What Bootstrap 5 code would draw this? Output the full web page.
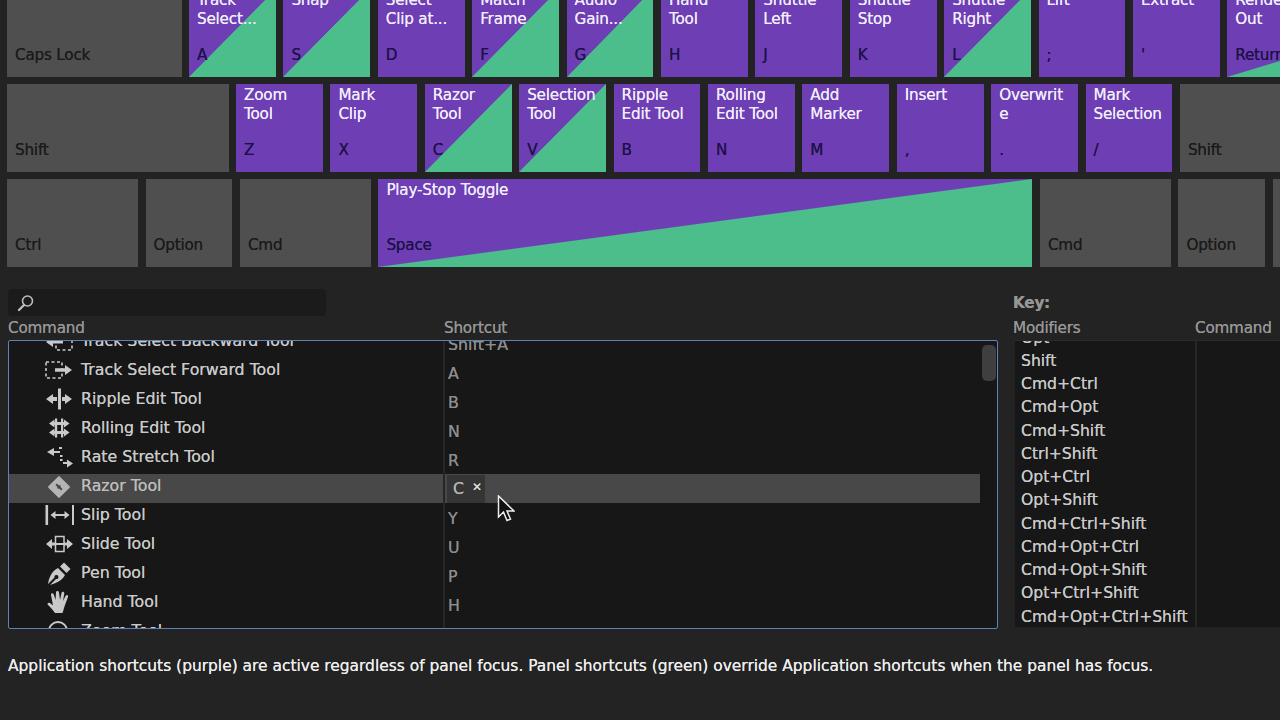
<!DOCTYPE html>
<html lang="en">
<head>
  <meta charset="UTF-8">
  <meta name="viewport" content="width=device-width, initial-scale=1.0">
  <title>Keyboard Shortcuts</title>
  <link href="https://cdn.jsdelivr.net/npm/bootstrap@5.3.0/dist/css/bootstrap.min.css" rel="stylesheet">
  <style>
    html, body { height: 720px; overflow: hidden; }
    body {
      background-color: #232323;
      font-family: "DejaVu Sans", sans-serif;
      font-size: 15.2px;
      letter-spacing: -0.2px;
      text-shadow: 0 0 .6px currentColor;
    }
    .kb-wrap { margin-top: -11px; padding-left: 7px; gap: 7.5px; width: 1400px; }
    .kb-row { gap: 7.5px; }
    .kb-key {
      width: 86.9px;
      height: 87.5px;
      flex: none;
      padding: 2px 2px 11.5px 8px;
      line-height: 19px;
      color: #f1edf8;
      background: #6e3fb4;
    }
    .kb-split { background: linear-gradient(to bottom right, #6e3fb4 49.7%, #4bbe8c 50.3%); }
    .kb-mod { background: #4f4f4f; }
    .kb-letter { color: #1d1248; }
    .kb-mod .kb-letter { color: #1b1b1b; }
    .w-caps { width: 174.5px; }
    .w-shift { width: 221.5px; }
    .w-ctrl { width: 131px; }
    .w-space { width: 654px; }
    .w-rshift { width: 180px; }
    .w-return { width: 290px; }

    .cmd-area { margin-top: 22.5px; padding-left: 8px; }
    .cmd-left { width: 990px; flex: none; }
    .cmd-right { margin-left: 15px; width: 300px; flex: none; padding-top: 4px; }
    .search-box { width: 318px; height: 27px; background: #1b1b1b; padding-left: 8px; }
    .head-txt { color: #969696; line-height: 20px; height: 20px; margin-top: 2px; }
    .col-cmd { width: 436px; }
    .cmd-panel {
      height: 289px;
      margin-top: 2px;
      background: #171717;
      border: 1px solid #5f80b8;
      border-radius: 2px;
      overflow: hidden;
      font-size: 15.8px;
      letter-spacing: 0;
    }
    .cmd-scroll { margin-top: -12px; }
    .cmd-row { height: 29px; color: #c9c9c9; width: 971px; }
    .cmd-row.is-active { background: #484848; color: #bdbdbd; }
    .cmd-name { width: 436px; padding-left: 35px; padding-bottom: 6px; gap: 7px; height: 100%; border-right: 2px solid #262626; }
    .cmd-name svg { flex: none; }
    .sc-txt { color: #8d8d8d; padding: 2px 0 0 3px; }
    .sc-chip {
      margin-left: 2px;
      width: 38px;
      height: 28px;
      background: #353535;
      color: #b5b5b5;
      padding: 1px 0 0 6px;
      gap: 8px;
    }
    .sc-x { font-size: 12px; line-height: 1; margin-top: -5px; color: #ddd; }
    .scroll-thumb {
      top: 4px;
      right: 1px;
      width: 14px;
      height: 36px;
      background: #3f3f3f;
      border-radius: 5px;
    }
    .mouse-ptr { left: 488px; top: 154px; }

    .key-title { color: #969696; font-weight: 700; line-height: 20px; height: 20px; }
    .cmd-right .head-txt { margin-top: 5px; }
    .head-mod { width: 182px; }
    .mod-panel { height: 287px; margin: 2px 0 0 2px; background: #171717; overflow: hidden; border-top: 1px solid #2b2b2b; }
    .mod-col { width: 182px; margin-top: -14.5px; padding-left: 6px; border-right: 2px solid #262626; height: 320px; color: #c9c9c9; font-size: 15.6px; letter-spacing: 0; }
    .mod-col div { height: 23.25px; line-height: 23px; white-space: nowrap; }
    .foot-note { padding: 26px 0 0 8px; color: #eee; font-size: 15.45px; letter-spacing: 0; white-space: nowrap; }
  </style>
</head>
<body>
  <!-- keyboard -->
  <div class="kb-wrap d-flex flex-column">
    <div class="kb-row d-flex">
      <div class="kb-key kb-mod w-caps d-flex flex-column justify-content-end"><span class="kb-letter">Caps Lock</span></div>
      <div class="kb-key kb-split d-flex flex-column justify-content-between"><span>Track<br>Select...</span><span class="kb-letter">A</span></div>
      <div class="kb-key kb-split d-flex flex-column justify-content-between"><span>Snap</span><span class="kb-letter">S</span></div>
      <div class="kb-key d-flex flex-column justify-content-between"><span>Select<br>Clip at...</span><span class="kb-letter">D</span></div>
      <div class="kb-key kb-split d-flex flex-column justify-content-between"><span>Match<br>Frame</span><span class="kb-letter">F</span></div>
      <div class="kb-key kb-split d-flex flex-column justify-content-between"><span>Audio<br>Gain...</span><span class="kb-letter">G</span></div>
      <div class="kb-key d-flex flex-column justify-content-between"><span>Hand<br>Tool</span><span class="kb-letter">H</span></div>
      <div class="kb-key d-flex flex-column justify-content-between"><span>Shuttle<br>Left</span><span class="kb-letter">J</span></div>
      <div class="kb-key d-flex flex-column justify-content-between"><span>Shuttle<br>Stop</span><span class="kb-letter">K</span></div>
      <div class="kb-key kb-split d-flex flex-column justify-content-between"><span>Shuttle<br>Right</span><span class="kb-letter">L</span></div>
      <div class="kb-key d-flex flex-column justify-content-between"><span>Lift</span><span class="kb-letter">;</span></div>
      <div class="kb-key d-flex flex-column justify-content-between"><span>Extract</span><span class="kb-letter">'</span></div>
      <div class="kb-key kb-split w-return d-flex flex-column justify-content-between"><span>Render<br>Out</span><span class="kb-letter">Return</span></div>
    </div>
    <div class="kb-row d-flex">
      <div class="kb-key kb-mod w-shift d-flex flex-column justify-content-end"><span class="kb-letter">Shift</span></div>
      <div class="kb-key d-flex flex-column justify-content-between"><span>Zoom<br>Tool</span><span class="kb-letter">Z</span></div>
      <div class="kb-key d-flex flex-column justify-content-between"><span>Mark<br>Clip</span><span class="kb-letter">X</span></div>
      <div class="kb-key kb-split d-flex flex-column justify-content-between"><span>Razor<br>Tool</span><span class="kb-letter">C</span></div>
      <div class="kb-key kb-split d-flex flex-column justify-content-between"><span>Selection<br>Tool</span><span class="kb-letter">V</span></div>
      <div class="kb-key d-flex flex-column justify-content-between"><span>Ripple<br>Edit Tool</span><span class="kb-letter">B</span></div>
      <div class="kb-key d-flex flex-column justify-content-between"><span>Rolling<br>Edit Tool</span><span class="kb-letter">N</span></div>
      <div class="kb-key d-flex flex-column justify-content-between"><span>Add<br>Marker</span><span class="kb-letter">M</span></div>
      <div class="kb-key d-flex flex-column justify-content-between"><span>Insert</span><span class="kb-letter">,</span></div>
      <div class="kb-key d-flex flex-column justify-content-between"><span>Overwrit<br>e</span><span class="kb-letter">.</span></div>
      <div class="kb-key d-flex flex-column justify-content-between"><span>Mark<br>Selection</span><span class="kb-letter">/</span></div>
      <div class="kb-key kb-mod w-rshift d-flex flex-column justify-content-end"><span class="kb-letter">Shift</span></div>
    </div>
    <div class="kb-row d-flex">
      <div class="kb-key kb-mod w-ctrl d-flex flex-column justify-content-end"><span class="kb-letter">Ctrl</span></div>
      <div class="kb-key kb-mod d-flex flex-column justify-content-end"><span class="kb-letter">Option</span></div>
      <div class="kb-key kb-mod w-ctrl d-flex flex-column justify-content-end"><span class="kb-letter">Cmd</span></div>
      <div class="kb-key kb-split w-space d-flex flex-column justify-content-between"><span>Play-Stop Toggle</span><span class="kb-letter">Space</span></div>
      <div class="kb-key kb-mod w-ctrl d-flex flex-column justify-content-end"><span class="kb-letter">Cmd</span></div>
      <div class="kb-key kb-mod d-flex flex-column justify-content-end"><span class="kb-letter">Option</span></div>
      <div class="kb-key kb-mod d-flex flex-column justify-content-end"><span class="kb-letter">Cmd</span></div>
    </div>
  </div>

  <div class="cmd-area d-flex">
    <div class="cmd-left">
      <div class="search-box d-flex align-items-center rounded-1">
        <svg width="20" height="18" viewBox="0 0 20 18" fill="none" stroke="#bdbdbd"><circle cx="11.5" cy="7" r="5" stroke-width="1.6"/><path d="M8 11 3 16" stroke-width="2.4" stroke-linecap="round"/></svg>
      </div>
      <div class="head-txt d-flex"><span class="col-cmd">Command</span><span>Shortcut</span></div>
      <div class="cmd-panel position-relative">
        <div class="cmd-scroll">
          <div class="cmd-row d-flex align-items-center">
            <div class="cmd-name d-flex align-items-center">
              <svg width="30" height="24" viewBox="0 0 30 24" fill="none" stroke="#c9c9c9"><rect x="12" y="5" width="16" height="16" stroke-width="1.6" stroke-dasharray="3 2.5"/><path d="M19 13H7" stroke-width="3"/><path d="M9 8 2 13l7 5z" fill="#c9c9c9" stroke="none"/></svg>
              <span>Track Select Backward Tool</span>
            </div>
            <span class="sc-txt">Shift+A</span>
          </div>
          <div class="cmd-row d-flex align-items-center">
            <div class="cmd-name d-flex align-items-center">
              <svg width="30" height="24" viewBox="0 0 30 24" fill="none" stroke="#c9c9c9"><rect x="2" y="4" width="16" height="16" stroke-width="1.6" stroke-dasharray="3 2.5"/><path d="M11 12h12" stroke-width="3.4"/><path d="M21 7l7 5-7 5z" fill="#c9c9c9" stroke="none"/></svg>
              <span>Track Select Forward Tool</span>
            </div>
            <span class="sc-txt">A</span>
          </div>
          <div class="cmd-row d-flex align-items-center">
            <div class="cmd-name d-flex align-items-center">
              <svg width="30" height="24" viewBox="0 0 30 24" fill="#c9c9c9"><rect x="14" y="1.5" width="3" height="21"/><path d="M2 12l7-5v3h4v4H9v3z"/><path d="M28 12l-7-5v3h-3v4h3v3z"/></svg>
              <span>Ripple Edit Tool</span>
            </div>
            <span class="sc-txt">B</span>
          </div>
          <div class="cmd-row d-flex align-items-center">
            <div class="cmd-name d-flex align-items-center">
              <svg width="30" height="24" viewBox="0 0 30 24" fill="#c9c9c9"><rect x="11" y="2.5" width="2.2" height="19"/><rect x="17" y="2.5" width="2.2" height="19"/><path d="M5 7.500 10.500 3.500v2.500H20V3.500L25.500 7.500 20 11.500V9H10.500v2.500z"/><path d="M5 16.500 10.500 12.500V15H20v-2.500L25.500 16.500 20 20.500V18H10.500v2.500z"/></svg>
              <span>Rolling Edit Tool</span>
            </div>
            <span class="sc-txt">N</span>
          </div>
          <div class="cmd-row d-flex align-items-center">
            <div class="cmd-name d-flex align-items-center">
              <svg width="30" height="24" viewBox="0 0 30 24" fill="#c9c9c9"><path d="M3 7l7-4v3h6v2h-6v3z"/><rect x="15" y="2" width="3" height="2"/><rect x="16" y="10" width="2.5" height="2"/><rect x="16" y="14" width="2.5" height="2"/><path d="M19 17h4v-2.500l6 4-6 4V19h-4z"/></svg>
              <span>Rate Stretch Tool</span>
            </div>
            <span class="sc-txt">R</span>
          </div>
          <div class="cmd-row is-active d-flex align-items-center">
            <div class="cmd-name d-flex align-items-center">
              <svg width="30" height="24" viewBox="0 0 30 24"><g transform="rotate(45 15 13)"><rect x="7" y="5" width="16" height="16" rx="1" fill="#b4b4b4"/><path d="M11 13h8M15 11v4" stroke="#484848" stroke-width="2"/></g></svg>
              <span>Razor Tool</span>
            </div>
            <div class="sc-chip d-flex align-items-center"><span>C</span><span class="sc-x">&#10005;</span></div>
          </div>
          <div class="cmd-row d-flex align-items-center">
            <div class="cmd-name d-flex align-items-center">
              <svg width="30" height="24" viewBox="0 0 30 24" fill="#c9c9c9"><rect x="1.500" y="2" width="2.600" height="20"/><rect x="28" y="2" width="2.600" height="20"/><path d="M6.500 12l5-4v3h9V8l5 4-5 4v-3h-9v3z"/></svg>
              <span>Slip Tool</span>
            </div>
            <span class="sc-txt">Y</span>
          </div>
          <div class="cmd-row d-flex align-items-center">
            <div class="cmd-name d-flex align-items-center">
              <svg width="30" height="24" viewBox="0 0 30 24" fill="#c9c9c9"><path d="M2 12l6-5v3.500h15V7l6 5-6 5v-3.500H8V17z"/><rect x="11.500" y="4.500" width="8.500" height="15" fill="#171717" stroke="#c9c9c9" stroke-width="1.500"/><path d="M11.500 11h8.500v2h-8.500z"/></svg>
              <span>Slide Tool</span>
            </div>
            <span class="sc-txt">U</span>
          </div>
          <div class="cmd-row d-flex align-items-center">
            <div class="cmd-name d-flex align-items-center">
              <svg width="30" height="24" viewBox="0 0 30 24" fill="#c9c9c9"><path d="M4 23C5 16 8 10 14 7l7 7c-3 6-9 8-15 10l6-6a2 2 0 1 0-1.500-1.500z"/><path d="M16 5.500 20 1.500l6.500 6.500-4 4z"/></svg>
              <span>Pen Tool</span>
            </div>
            <span class="sc-txt">P</span>
          </div>
          <div class="cmd-row d-flex align-items-center">
            <div class="cmd-name d-flex align-items-center">
              <svg width="30" height="24" viewBox="0 0 30 24" fill="#c9c9c9"><path d="M11 23c-2-3-4-5-7-8-1.500-1.500.5-3 2-2l3 2.500L7 5c-.3-2 2-2.500 2.700-.7L11.500 10 12 2.500c0-2 2.800-2 3 0L16 10l1.500-7c.4-2 3-1.500 2.800.4L19 11l2.500-5c1-1.700 3.200-.8 2.500 1L21 15c-1 3-1.500 5-2.500 8z"/></svg>
              <span>Hand Tool</span>
            </div>
            <span class="sc-txt">H</span>
          </div>
          <div class="cmd-row d-flex align-items-center">
            <div class="cmd-name d-flex align-items-center">
              <svg width="30" height="24" viewBox="0 0 30 24" fill="none" stroke="#c9c9c9"><circle cx="14" cy="12" r="9" stroke-width="2"/></svg>
              <span>Zoom Tool</span>
            </div>
          </div>
        </div>
        <div class="scroll-thumb position-absolute"></div>
        <svg class="mouse-ptr position-absolute" width="18" height="27" viewBox="0 0 18 27"><path d="M1.500 1v21l5-5 3.500 8.500 3.500-1.500-3.500-8h7z" fill="#111" stroke="#eee" stroke-width="1.500"/></svg>
      </div>
    </div>
    <div class="cmd-right">
      <div class="key-title">Key:</div>
      <div class="head-txt d-flex"><span class="head-mod">Modifiers</span><span>Command</span></div>
      <div class="mod-panel">
        <div class="mod-col">
          <div>Opt</div>
          <div>Shift</div>
          <div>Cmd+Ctrl</div>
          <div>Cmd+Opt</div>
          <div>Cmd+Shift</div>
          <div>Ctrl+Shift</div>
          <div>Opt+Ctrl</div>
          <div>Opt+Shift</div>
          <div>Cmd+Ctrl+Shift</div>
          <div>Cmd+Opt+Ctrl</div>
          <div>Cmd+Opt+Shift</div>
          <div>Opt+Ctrl+Shift</div>
          <div>Cmd+Opt+Ctrl+Shift</div>
        </div>
      </div>
    </div>
  </div>

  <div class="foot-note">Application shortcuts (purple) are active regardless of panel focus. Panel shortcuts (green) override Application shortcuts when the panel has focus.</div>

  <script src="https://cdn.jsdelivr.net/npm/bootstrap@5.3.0/dist/js/bootstrap.bundle.min.js"></script>
</body>
</html>
